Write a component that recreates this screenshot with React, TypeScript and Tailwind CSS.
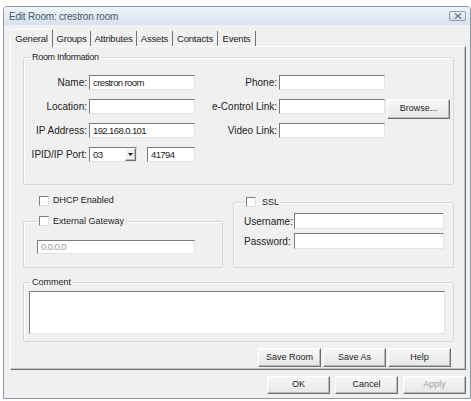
import type { ReactNode } from "react";

// classic win32 look: sunken fields, raised buttons
const sunken =
  "bg-white border border-t-[#7a7a7a] border-l-[#7a7a7a] border-r-[#e3e3e3] border-b-[#e3e3e3]";
const raised =
  "border border-t-white border-l-white border-r-[#707070] border-b-[#707070] shadow-[inset_-1px_-1px_0_#b9b9b9]";

const TextBox = ({ value = "", className = "", disabled = false }: { value?: string; className?: string; disabled?: boolean }) => (
  <input
    readOnly
    defaultValue={value}
    className={`${sunken} px-[3px] text-[9.5px] tracking-[-0.6px] leading-[13px] outline-none ${
      disabled ? "bg-[#f0f0f0] text-[#9a9a9a]" : "text-[#222]"
    } ${className}`}
  />
);

const WinButton = ({ children, disabled = false, className = "" }: { children: ReactNode; disabled?: boolean; className?: string }) => (
  <button
    className={`${raised} w-[63px] bg-linear-to-b from-[#f7f7f7] to-[#e7e7e7] text-[9px] ${
      disabled ? "text-[#a3a3a3]" : "text-[#222]"
    } ${className}`}
  >
    {children}
  </button>
);

const CheckBox = () => (
  <span className="inline-block w-[10px] h-[10px] shrink-0 bg-white border border-t-[#808080] border-l-[#808080] border-r-[#dedede] border-b-[#dedede]" />
);

const GroupBox = ({ legend, legendClass = "ml-[6px]", className = "", children }: { legend: ReactNode; legendClass?: string; className?: string; children: ReactNode }) => (
  <fieldset className={`border border-[#d3d6da] rounded-[2px] shadow-[inset_1px_1px_0_white] ${className}`}>
    <legend className={`${legendClass} px-[2px] leading-[12px] text-[9px] text-[#222]`}>{legend}</legend>
    {children}
  </fieldset>
);

const tabs = [
  { name: "General", w: "w-[43px]" },
  { name: "Groups", w: "w-[38px]" },
  { name: "Attributes", w: "w-[46px]" },
  { name: "Assets", w: "w-[36px]" },
  { name: "Contacts", w: "w-[45px]" },
  { name: "Events", w: "w-[38px]" },
];

const Label = ({ children, className = "" }: { children: ReactNode; className?: string }) => (
  <span className={`text-[10px] leading-[15px] text-[#222] ${className}`}>{children}</span>
);

export default function App() {
  return (
    <div className="w-[471px] h-[401px] bg-white pt-[6px] pl-[3px] font-['Liberation_Sans',Arial,sans-serif]">
      <div className="w-[468px] h-[393px] border border-[#8d99a6] rounded-t-[4px] bg-[#f0f0f0] flex flex-col overflow-hidden">
        {/* title bar */}
        <div className="h-[18px] shrink-0 flex items-center justify-between pl-[5px] pr-[4px] bg-linear-to-b from-[#eef3f8] to-[#d6e2ef]">
          <span className="text-[10px] tracking-[-0.2px] text-[#4a586b]">Edit Room: crestron room</span>
          <button className="w-[17px] h-[10px] flex items-center justify-center rounded-[2px] border border-[#8e9db2] bg-linear-to-b from-[#eef2f7] to-[#d3dce8]">
            <svg width="8" height="6" viewBox="0 0 8 6">
              <path d="M1 0.5 L7 5.5 M7 0.5 L1 5.5" stroke="#6a7a90" strokeWidth="1.4" />
            </svg>
          </button>
        </div>

        <div className="flex flex-col pt-[4px] pl-[6px]">
          {/* tab strip */}
          <div className="h-[17px] flex items-end pl-[1px]">
            {tabs.map((t, i) =>
              i === 0 ? (
                <div
                  key={t.name}
                  className={`${t.w} h-[18px] relative z-10 -mb-[1px] -ml-[1px] bg-[#f0f0f0] border-t border-l border-r border-t-white border-l-white border-r-[#707070] text-center text-[9.5px] tracking-[-0.2px] leading-[17px] text-[#222]`}
                >
                  {t.name}
                </div>
              ) : (
                <div
                  key={t.name}
                  className={`${t.w} h-[15px] border-r border-r-[#707070] text-center text-[9.5px] tracking-[-0.2px] leading-[15px] text-[#222]`}
                >
                  {t.name}
                </div>
              )
            )}
          </div>

          {/* tab page */}
          <div className="w-[456px] h-[324px] flex flex-col pl-[12px] pr-[11px] pt-[4px] border border-t-white border-l-white border-r-[#707070] border-b-[#707070] shadow-[inset_-1px_-1px_0_#c4c4c4]">
            <GroupBox legend={<span className="tracking-[-0.3px]">Room Information</span>} className="pt-[12px] pb-[22px]">
              <div className="flex flex-col gap-[9px]">
                <div className="h-[15px] flex items-start">
                  <Label className="w-[63px] text-right">Name:</Label>
                  <TextBox value="crestron room" className="ml-[2px] w-[106px] h-[15px]" />
                  <Label className="w-[82px] text-right">Phone:</Label>
                  <TextBox className="ml-[2px] w-[106px] h-[15px]" />
                </div>
                <div className="h-[15px] flex items-start">
                  <Label className="w-[63px] text-right">Location:</Label>
                  <TextBox className="ml-[2px] w-[106px] h-[15px]" />
                  <Label className="w-[82px] text-right">e-Control Link:</Label>
                  <TextBox className="ml-[2px] w-[106px] h-[15px]" />
                  <WinButton className="ml-[2px] h-[20px] shrink-0">Browse...</WinButton>
                </div>
                <div className="h-[15px] flex items-start">
                  <Label className="w-[63px] text-right">IP Address:</Label>
                  <TextBox value="192.168.0.101" className="ml-[2px] w-[106px] h-[15px]" />
                  <Label className="w-[82px] text-right">Video Link:</Label>
                  <TextBox className="ml-[2px] w-[106px] h-[15px]" />
                </div>
                <div className="h-[15px] flex items-start">
                  <Label className="w-[63px] text-right">IPID/IP Port:</Label>
                  <div className={`${sunken} ml-[2px] w-[48px] h-[15px] flex items-stretch`}>
                    <span className="flex-1 pl-[3px] text-[9.5px] tracking-[-0.6px] leading-[13px] text-[#222]">03</span>
                    <span className={`${raised} w-[11px] bg-[#f0f0f0] flex items-center justify-center`}>
                      <svg width="5" height="3" viewBox="0 0 5 3">
                        <path d="M0 0 H5 L2.5 3 Z" fill="#1a1a1a" />
                      </svg>
                    </span>
                  </div>
                  <TextBox value="41794" className="ml-[10px] w-[48px] h-[15px]" />
                </div>
              </div>
            </GroupBox>

            <div className="flex gap-[10px] mt-[10px]">
              <div className="w-[200px] flex flex-col">
                <div className="h-[12px] flex items-center gap-[4px] pl-[16px]">
                  <CheckBox />
                  <span className="text-[9px] text-[#222]">DHCP Enabled</span>
                </div>
                <GroupBox
                  className="mt-[8px] pt-[6px] pb-[10px]"
                  legendClass="ml-[13px]"
                  legend={
                    <span className="flex items-center gap-[4px]">
                      <CheckBox />
                      External Gateway
                    </span>
                  }
                >
                  <TextBox value="0.0.0.0" disabled className="ml-[13px] w-[158px] h-[14px]" />
                </GroupBox>
              </div>

              <GroupBox
                className="w-[221px] mt-[1px] pt-[5px] pb-[8px] pl-[10px]"
                legendClass="ml-0"
                legend={
                  <span className="flex items-center gap-[6px]">
                    <CheckBox />
                    SSL
                  </span>
                }
              >
                <div className="flex flex-col gap-[4px]">
                  <div className="flex items-center">
                    <Label className="w-[50px] text-[9px]">Username:</Label>
                    <TextBox className="w-[150px] h-[16px]" />
                  </div>
                  <div className="flex items-center">
                    <Label className="w-[50px] text-[9px]">Password:</Label>
                    <TextBox className="w-[150px] h-[16px]" />
                  </div>
                </div>
              </GroupBox>
            </div>

            <GroupBox legend="Comment" className="mt-[8px] pt-[3px] pb-[7px]">
              <textarea readOnly className={`${sunken} block ml-[5px] w-[416px] h-[43px] resize-none outline-none`} />
            </GroupBox>

            <div className="flex justify-end gap-[2px] pr-[3px] mt-[6px]">
              <WinButton className="h-[19px]">Save Room</WinButton>
              <WinButton className="h-[19px]">Save As</WinButton>
              <WinButton className="h-[19px]">Help</WinButton>
            </div>
          </div>
        </div>

        {/* dialog buttons */}
        <div className="flex justify-end gap-[5px] pr-[4px] mt-[6px]">
          <WinButton className="h-[18px]">OK</WinButton>
          <WinButton className="h-[18px]">Cancel</WinButton>
          <WinButton className="h-[18px]" disabled>
            Apply
          </WinButton>
        </div>
      </div>
    </div>
  );
}
